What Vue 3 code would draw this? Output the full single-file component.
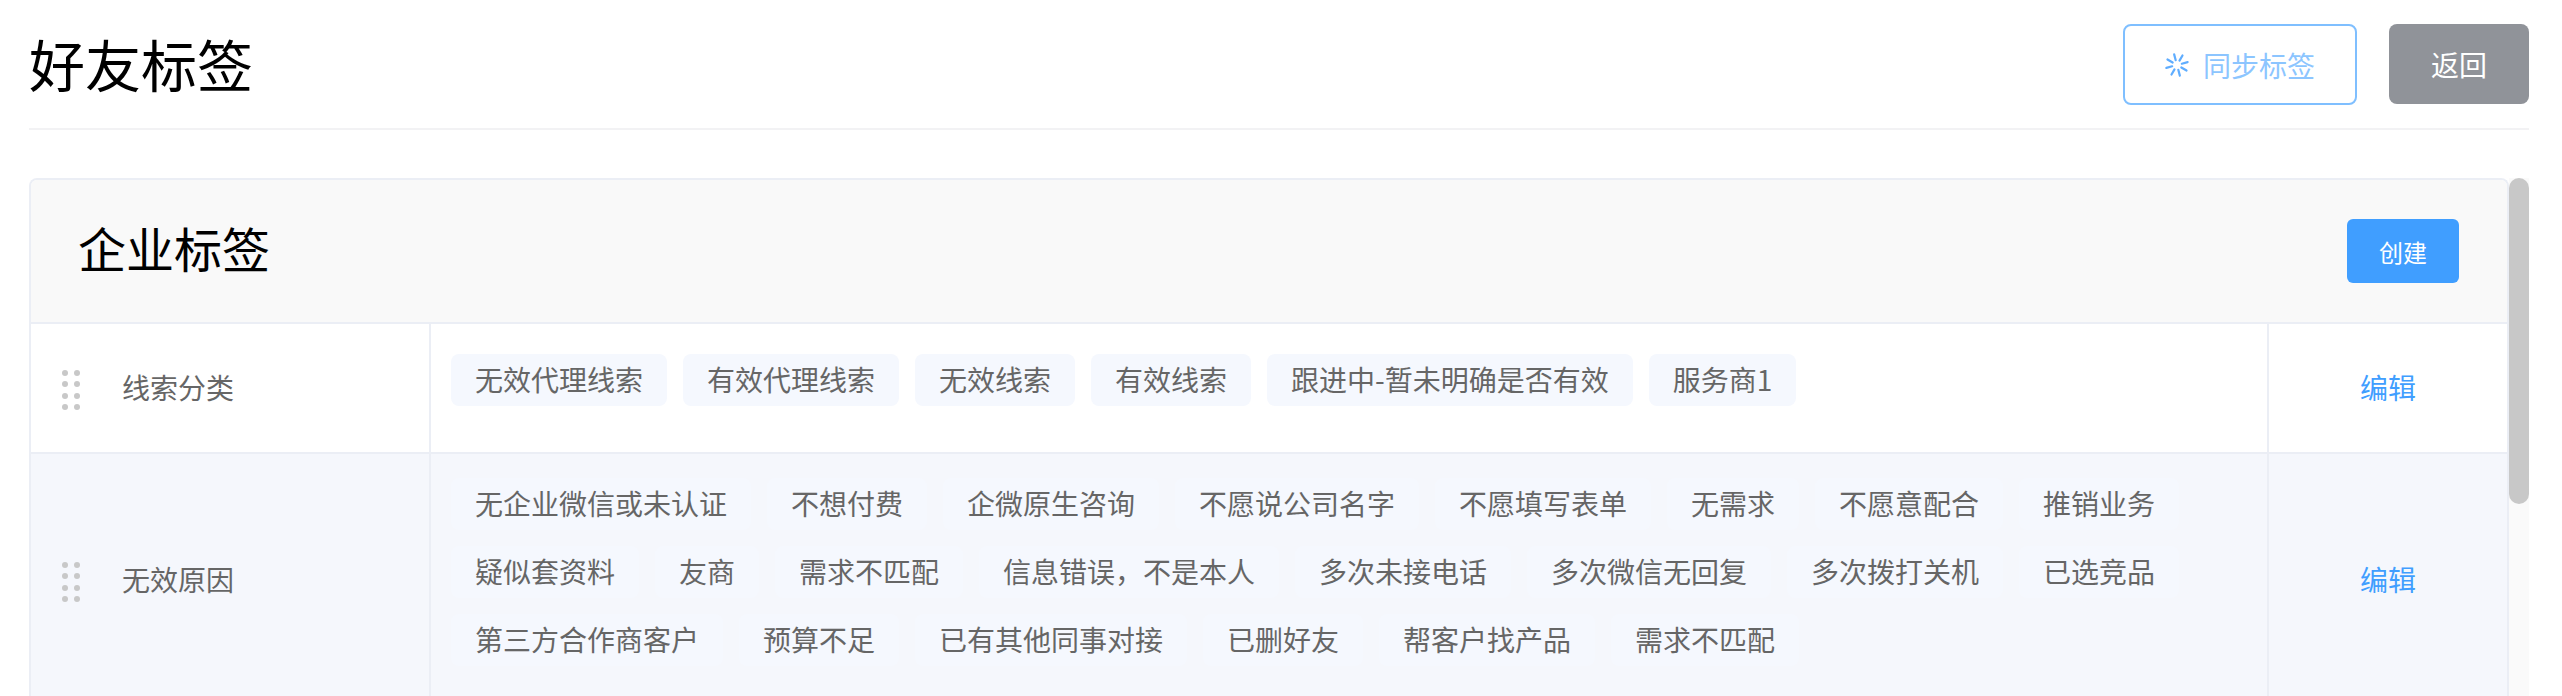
<template>
  <div class="page">
    <header class="page-head">
      <h1 class="page-title">好友标签</h1>
      <div class="page-actions">
        <button class="btn btn-sync">
          <svg class="spin" viewBox="0 0 24 24" width="24" height="24">
            <g fill="none" stroke="#5fadff" stroke-width="2.2" stroke-linecap="round" transform="rotate(-15 12 12)">
              <line v-for="a in spokes" :key="a" x1="12" y1="1" x2="12" y2="7" :transform="`rotate(${a} 12 12)`" />
            </g>
          </svg>
          <span>同步标签</span>
        </button>
        <button class="btn btn-back">返回</button>
      </div>
    </header>

    <div class="scroller">
      <section class="panel">
        <div class="panel-head">
          <h2 class="panel-title">企业标签</h2>
          <button class="btn-create">创建</button>
        </div>
        <div v-for="(group, i) in groups" :key="group.name" class="row" :class="{ 'row-alt': i % 2 === 1 }">
          <div class="cell-name">
            <span class="drag"><i v-for="n in 8" :key="n"></i></span>
            <span class="name">{{ group.name }}</span>
          </div>
          <div class="cell-tags">
            <div class="tags">
              <span v-for="(tag, j) in group.tags" :key="j" class="tag">{{ tag }}</span>
            </div>
          </div>
          <div class="cell-op"><a class="link">编辑</a></div>
        </div>
      </section>
      <div class="scroll-track"><div class="scroll-thumb"></div></div>
    </div>
  </div>
</template>

<script setup>
const spokes = [0, 45, 90, 135, 180, 225, 270, 315]

const groups = [
  {
    name: '线索分类',
    tags: ['无效代理线索', '有效代理线索', '无效线索', '有效线索', '跟进中-暂未明确是否有效', '服务商1']
  },
  {
    name: '无效原因',
    tags: [
      '无企业微信或未认证', '不想付费', '企微原生咨询', '不愿说公司名字', '不愿填写表单', '无需求', '不愿意配合', '推销业务',
      '疑似套资料', '友商', '需求不匹配', '信息错误\uFF0C不是本人', '多次未接电话', '多次微信无回复', '多次拨打关机', '已选竞品',
      '第三方合作商客户', '预算不足', '已有其他同事对接', '已删好友', '帮客户找产品', '需求不匹配'
    ]
  }
]
</script>

<style>
html, body {
  margin: 0;
  height: 100%;
  overflow: hidden;
  background: #fff;
}
</style>

<style scoped>
.page {
  width: 2562px;
  height: 696px;
  box-sizing: border-box;
  padding: 0 33px 0 29px;
  overflow: hidden;
  font-family: "Noto Sans CJK SC", "Noto Sans", sans-serif;
  color: #666;
}

.page-head {
  display: flex;
  justify-content: space-between;
  align-items: flex-start;
  height: 128px;
  border-bottom: 2px solid #f2f2f4;
  margin-bottom: 48px;
}

.page-title {
  margin: 0;
  padding-top: 23px;
  font-size: 56px;
  line-height: 80px;
  font-weight: 400;
  color: #000;
}

.page-actions {
  display: flex;
  gap: 32px;
  margin-top: 24px;
}

.btn {
  display: flex;
  align-items: center;
  justify-content: center;
  height: 80px;
  box-sizing: border-box;
  border-radius: 8px;
  font: inherit;
  font-size: 28px;
  line-height: 1;
  cursor: pointer;
}

.btn-sync {
  width: 234px;
  gap: 14px;
  height: 81px;
  background: #fff;
  border: 2px solid #7fbfff;
  color: #8cc5ff;
}

.btn-back {
  width: 140px;
  padding-bottom: 2px;
  background: #909399;
  border: 0;
  color: #fff;
}

.scroller {
  display: flex;
  height: 518px;
  overflow: hidden;
}

.panel {
  width: 2480px;
  flex: none;
  box-sizing: border-box;
  border: 2px solid #ebeef5;
  border-bottom: 0;
  border-radius: 8px 8px 0 0;
}

.panel-head {
  display: flex;
  justify-content: space-between;
  align-items: center;
  height: 142px;
  padding: 0 48px 0 47px;
  background: #f9f9f9;
  border-bottom: 2px solid #ebeef5;
  border-radius: 6px 6px 0 0;
}

.panel-title {
  margin: -8px 0 0;
  font-size: 48px;
  line-height: 64px;
  font-weight: 400;
  color: #000;
}

.btn-create {
  width: 112px;
  height: 64px;
  border: 0;
  border-radius: 6px;
  background: #409eff;
  color: #fff;
  font: inherit;
  font-size: 24px;
  cursor: pointer;
}

.row {
  display: flex;
  border-bottom: 2px solid #ebeef5;
  background: #fff;
}

.row-alt {
  background: #f5f7fc;
}

.cell-name {
  flex: none;
  width: 398px;
  box-sizing: border-box;
  display: flex;
  align-items: center;
  padding-left: 31px;
}

.drag {
  display: grid;
  grid-template-columns: 6px 6px;
  grid-auto-rows: 6px;
  column-gap: 6px;
  row-gap: 5.5px;
  margin: 4px 42px 0 0;
}

.drag i {
  display: block;
  border-radius: 50%;
  background: #c8c8c8;
}

.name {
  font-size: 28px;
  line-height: 40px;
  margin-top: -2px;
}

.cell-tags {
  flex: none;
  width: 1840px;
  box-sizing: border-box;
  min-height: 128px;
  display: flex;
  align-items: center;
  padding: 24px 20px;
  border-left: 2px solid #ebeef5;
  border-right: 2px solid #ebeef5;
}

.tags {
  display: flex;
  flex-wrap: wrap;
}

.tag {
  height: 52px;
  line-height: 50px;
  margin: 0 16px 16px 0;
  padding: 0 24px;
  border-radius: 8px;
  background: #f5f8fe;
  font-size: 28px;
  white-space: nowrap;
}

.cell-op {
  flex: 1;
  display: flex;
  align-items: center;
  justify-content: center;
}

.link {
  color: #409eff;
  font-size: 28px;
  line-height: 40px;
  margin-top: -2px;
  cursor: pointer;
}

.scroll-track {
  flex: none;
  width: 20px;
  background: #fafafa;
}

.scroll-thumb {
  height: 326px;
  border-radius: 10px;
  background: #c8c8c8;
}
</style>
